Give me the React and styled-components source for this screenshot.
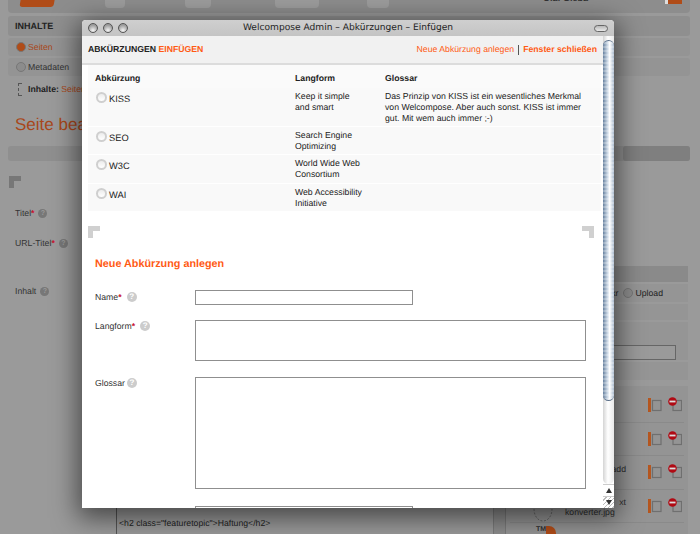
import styled, { createGlobalStyle } from "styled-components";

const GlobalStyle = createGlobalStyle`
  html, body {
    margin: 0;
    padding: 0;
    background: #9a9a9a;
  }
  * {
    box-sizing: border-box;
  }
`;

const abbreviations = [
  {
    name: "KISS",
    long: ["Keep it simple", "and smart"],
    glossary: [
      "Das Prinzip von KISS ist ein wesentliches Merkmal",
      "von Welcompose. Aber auch sonst. KISS ist immer",
      "gut. Mit wem auch immer ;-)",
    ],
    height: 38,
  },
  { name: "SEO", long: ["Search Engine", "Optimizing"], glossary: [], height: 27 },
  { name: "W3C", long: ["World Wide Web", "Consortium"], glossary: [], height: 28 },
  { name: "WAI", long: ["Web Accessibility", "Initiative"], glossary: [], height: 27 },
];

const fileRows = [
  { top: "", bottom: "" },
  { top: "", bottom: "" },
  { top: "add", bottom: "" },
  { top: "xt", bottom: "konverter.jpg" },
];

function FileIcons() {
  return (
    <svg width="34" height="16" viewBox="0 0 34 16">
      <rect x="0" y="1" width="3" height="14" fill="#b5561f" />
      <rect x="4.5" y="3.5" width="8.5" height="10" fill="none" stroke="#6f6f6f" strokeWidth="1.2" />
      <rect x="25" y="3.5" width="8.5" height="10" fill="none" stroke="#6f6f6f" strokeWidth="1.2" />
      <circle cx="24.5" cy="4.5" r="4.3" fill="#b00a14" />
      <rect x="21.5" y="3.6" width="6" height="1.8" fill="#ddd" />
    </svg>
  );
}

function Gear() {
  return (
    <svg width="20" height="13" viewBox="0 0 20 13">
      <path d="M1 0 C1 7 5 12 10 12 C15 12 19 7 19 0" fill="none" stroke="#666" strokeDasharray="2 1.5" />
    </svg>
  );
}

function PageBehind() {
  return (
    <Page>
      <TopBar>
        <Logo />
        <GhostIcon $left={105} $width={20} />
        <GhostIcon $left={185} $width={26} />
        <GhostIcon $left={275} $width={44} />
        <GhostIcon $left={367} $width={22} />
        <UserName>Olaf Gleba</UserName>
        <UserBox />
      </TopBar>
      <SectionBar>INHALTE</SectionBar>
      <TabRow>
        <BackRadio $on />
        <TabLabel $on>Seiten</TabLabel>
      </TabRow>
      <TabRow>
        <BackRadio />
        <TabLabel>Metadaten</TabLabel>
      </TabRow>
      <Breadcrumb>
        <CropMark />
        <b>Inhalte:</b>&nbsp;<em>Seiten</em>
      </Breadcrumb>
      <PageTitle>Seite bearbeiten</PageTitle>
      <ToolBar>
        <ToolBarEnd />
      </ToolBar>
      <Columns>
        <FormSide>
          <BackCorner />
          <BackLabel $top={19}>
            <span>
              Titel<Req>*</Req>
            </span>
            <BackHelp>?</BackHelp>
          </BackLabel>
          <BackLabel $top={18}>
            <span>
              URL-Titel<Req>*</Req>
            </span>
            <BackHelp>?</BackHelp>
          </BackLabel>
          <BackLabel $top={36}>
            <span>Inhalt</span>
            <BackHelp>?</BackHelp>
          </BackLabel>
          <Editor>&lt;h2 class="featuretopic"&gt;Haftung&lt;/h2&gt;</Editor>
        </FormSide>
        <Gutter />
        <Sidebar>
          <SideHead />
          <SideRow $height={18}>
            <span>kr</span>
            <BackRadio />
            <span>Upload</span>
          </SideRow>
          <SideRow $height={16} />
          <SideRow $height={38} $end>
            <SideInput />
          </SideRow>
          <SideRow $height={18} />
          <FileList>
            {fileRows.map((row, i) => (
              <FileRow key={i}>
                <FileThumb>{i === 3 && <Gear />}</FileThumb>
                <FileName>
                  <FileTop>{row.top}</FileTop>
                  {row.bottom}
                </FileName>
                <FileIcons />
              </FileRow>
            ))}
            <LastRow>
              TM
              <OrangeMark />
            </LastRow>
          </FileList>
        </Sidebar>
      </Columns>
    </Page>
  );
}

export default function App() {
  return (
    <>
      <GlobalStyle />
      <Viewport>
        <PageBehind />
        <Window>
          <TitleBar>
            <Lights>
              <Light />
              <Light />
              <Light />
            </Lights>
            <WindowTitle>Welcompose Admin – Abkürzungen – Einfügen</WindowTitle>
            <Pill />
          </TitleBar>
          <WindowBody>
            <Content>
              <Header>
                <HeaderTitle>
                  ABKÜRZUNGEN <span>EINFÜGEN</span>
                </HeaderTitle>
                <HeaderLinks>
                  <HeaderLink>Neue Abkürzung anlegen</HeaderLink>
                  <Divider />
                  <HeaderLink $bold>Fenster schließen</HeaderLink>
                </HeaderLinks>
              </Header>
              <Table>
                <TableHead>
                  <span>Abkürzung</span>
                  <span>Langform</span>
                  <span>Glossar</span>
                </TableHead>
                {abbreviations.map((item) => (
                  <TableRow key={item.name} $height={item.height}>
                    <NameCell>
                      <Radio />
                      {item.name}
                    </NameCell>
                    <TextCell>
                      {item.long.map((line) => (
                        <div key={line}>{line}</div>
                      ))}
                    </TextCell>
                    <TextCell>
                      {item.glossary.map((line) => (
                        <div key={line}>{line}</div>
                      ))}
                    </TextCell>
                  </TableRow>
                ))}
              </Table>
              <Corners>
                <Corner />
                <Corner $right />
              </Corners>
              <FormHeading>Neue Abkürzung anlegen</FormHeading>
              <Form>
                <FieldLabel>
                  <span>
                    Name<Req>*</Req>
                  </span>
                  <Help $gap={5}>?</Help>
                </FieldLabel>
                <ShortInput />
                <FieldLabel $tight>
                  <span>
                    Langform<Req>*</Req>
                  </span>
                  <Help $gap={5}>?</Help>
                </FieldLabel>
                <LongField $height={41} $after={1} />
                <FieldLabel $tight>
                  <span>Glossar</span>
                  <Help $gap={2}>?</Help>
                </FieldLabel>
                <LongField $height={112} $after={2} />
                <span />
                <ShortInput />
              </Form>
            </Content>
            <Scrollbar>
              <Track>
                <Thumb />
              </Track>
              <ArrowButton>
                <Arrow />
              </ArrowButton>
              <ArrowButton $grip>
                <Arrow $down />
              </ArrowButton>
            </Scrollbar>
          </WindowBody>
        </Window>
      </Viewport>
    </>
  );
}

const Viewport = styled.div`
  position: relative;
  width: 700px;
  height: 534px;
  overflow: hidden;
  background: #9a9a9a;
  font-family: "Liberation Sans", Arial, sans-serif;
  text-rendering: geometricPrecision;
`;

/* page dimmed behind the popup */
const Page = styled.div`
  display: flex;
  flex-direction: column;
  height: 534px;
  padding: 0 10px 0 8px;
  font-size: 8.7px;
  color: #2c2c2c;
`;

const TopBar = styled.div`
  position: relative;
  flex: none;
  height: 13px;
  background: #8d8d8d;
  border-radius: 0 0 4px 4px;
  overflow: hidden;
`;

const Logo = styled.div`
  position: absolute;
  left: 12px;
  top: 0;
  width: 34px;
  height: 7px;
  background: #b04c18;
  border-radius: 0 0 3px 3px;
  transform: skewX(-10deg);
`;

const GhostIcon = styled.div`
  position: absolute;
  left: ${(p) => p.$left - 8}px;
  top: 0;
  width: ${(p) => p.$width}px;
  height: 8px;
  background: #9c9c9c;
  border-radius: 0 0 4px 4px;
`;

const UserName = styled.div`
  position: absolute;
  left: 535px;
  top: -8px;
  font-size: 9px;
  line-height: 12px;
  font-weight: bold;
  color: #333;
`;

const UserBox = styled.div`
  position: absolute;
  left: 657px;
  top: 0;
  width: 17px;
  height: 4px;
  background: #b04c18;
  border-left: 3px solid #ddd;
`;

const SectionBar = styled.div`
  flex: none;
  height: 20px;
  margin-top: 3px;
  padding-left: 7px;
  background: #8f8f8f;
  border-radius: 3px;
  font-size: 9px;
  font-weight: bold;
  line-height: 20px;
  color: #222;
`;

const TabRow = styled.div`
  flex: none;
  display: flex;
  align-items: center;
  gap: 2px;
  height: 18px;
  margin-top: 2px;
  padding-left: 8px;
  background: #949494;
  border-radius: 3px;
`;

const BackRadio = styled.span`
  flex: none;
  width: 10px;
  height: 10px;
  border-radius: 50%;
  border: 1px solid #777;
  background: ${(p) => (p.$on ? "#b04c18" : "#8c8c8c")};
`;

const TabLabel = styled.span`
  color: ${(p) => (p.$on ? "#a8471a" : "#333")};
`;

const Breadcrumb = styled.div`
  flex: none;
  display: flex;
  align-items: center;
  height: 16px;
  margin-top: 5px;
  padding-left: 10px;
  color: #222;

  em {
    font-style: normal;
    color: #a8471a;
  }
`;

const CropMark = styled.span`
  width: 4px;
  height: 13px;
  margin-right: 6px;
  border: 1px dashed #555;
  border-right: 0;
`;

const PageTitle = styled.div`
  flex: none;
  margin: 16px 0 0 7px;
  font-size: 17px;
  line-height: 24px;
  color: #a8471a;
`;

const ToolBar = styled.div`
  flex: none;
  display: flex;
  justify-content: flex-end;
  height: 15px;
  margin-top: 9px;
  background: #8f8f8f;
  border-radius: 3px;
`;

const ToolBarEnd = styled.div`
  width: 67px;
  background: #7f7f7f;
  border-radius: 3px;
`;

const Columns = styled.div`
  flex: 1;
  display: flex;
  min-height: 0;
`;

const FormSide = styled.div`
  position: relative;
  display: flex;
  flex-direction: column;
  width: 485px;
  padding-top: 15px;
`;

const BackCorner = styled.div`
  width: 12px;
  height: 12px;
  border-left: 5px solid #777;
  border-top: 5px solid #777;
  margin-left: 1px;
`;

const BackLabel = styled.div`
  display: flex;
  align-items: center;
  gap: 4px;
  height: 12px;
  margin: ${(p) => p.$top}px 0 0 7px;
  color: #333;
`;

const BackHelp = styled.span`
  width: 9px;
  height: 9px;
  border-radius: 50%;
  background: #777;
  color: #9a9a9a;
  font-size: 7px;
  font-weight: bold;
  line-height: 9px;
  text-align: center;
`;

const Editor = styled.div`
  margin: auto 0 0 108px;
  height: 26px;
  padding: 9px 0 0 2px;
  border-left: 1px solid #555;
  line-height: 12px;
  color: #222;
  white-space: nowrap;
`;

const Gutter = styled.div`
  width: 13px;
  margin-top: auto;
  height: 40px;
  border-left: 1px solid #7a7a7a;
  border-right: 1px solid #7a7a7a;
  background: #8c8c8c;
`;

const Sidebar = styled.div`
  flex: 1;
  display: flex;
  flex-direction: column;
  gap: 2px;
  padding-top: 105px;
  margin-right: 2px;
`;

const SideHead = styled.div`
  flex: none;
  height: 16px;
  background: #8a8a8a;
`;

const SideRow = styled.div`
  flex: none;
  display: flex;
  justify-content: flex-end;
  gap: 2px;
  height: ${(p) => p.$height}px;
  padding-right: ${(p) => (p.$end ? 12 : 25)}px;
  align-items: ${(p) => (p.$end ? "flex-end" : "center")};
  background: #959595;
  color: #222;

  span:first-child {
    margin-right: 3px;
  }
`;

const SideInput = styled.div`
  width: 160px;
  height: 15px;
  border: 1px solid #666;
  background: #9a9a9a;
`;

const FileList = styled.div`
  flex: 1;
  margin-top: 4px;
  padding: 3px 4px 0;
  background: #949494;
`;

const FileRow = styled.div`
  display: flex;
  align-items: center;
  height: 33.5px;
  padding-right: 2px;
  border-bottom: 1px solid #8a8a8a;
`;

const FileThumb = styled.div`
  flex: none;
  display: flex;
  align-items: flex-end;
  width: 55px;
  height: 100%;
  padding-left: 23px;
`;

const FileName = styled.div`
  width: 61px;
  min-height: 20px;
  margin: 3px 22px 0 0;
  font-size: 8.7px;
  line-height: 10px;
  color: #2c2c2c;
`;

const FileTop = styled.div`
  min-height: 10px;
  text-align: right;
`;

const LastRow = styled.div`
  display: flex;
  align-items: flex-start;
  padding: 3px 0 0 26px;
  font-size: 7px;
  font-weight: bold;
`;

const OrangeMark = styled.span`
  width: 10px;
  height: 10px;
  background: #b04c18;
  border-radius: 0 7px 0 0;
`;

/* popup window */
const Window = styled.div`
  position: absolute;
  left: 82px;
  top: 20px;
  display: flex;
  flex-direction: column;
  width: 532px;
  height: 488px;
  border-radius: 4px 4px 0 0;
  overflow: hidden;
  background: #fff;
  box-shadow: 0 6px 26px 4px rgba(0, 0, 0, 0.55);
`;

const TitleBar = styled.div`
  position: relative;
  flex: none;
  display: flex;
  align-items: center;
  justify-content: center;
  height: 16px;
  background: linear-gradient(#cfcfcf, #c4c4c4);
`;

const Lights = styled.div`
  position: absolute;
  left: 6px;
  top: 3px;
  display: flex;
  gap: 5px;
`;

const Light = styled.span`
  width: 10px;
  height: 10px;
  border-radius: 50%;
  border: 1px solid #555;
  background: radial-gradient(circle at 50% 80%, #f4f4f4, #9c9c9c 70%);
`;

const WindowTitle = styled.div`
  font-family: "DejaVu Sans", sans-serif;
  font-size: 9.1px;
  line-height: 17px;
  color: #222;
`;

const Pill = styled.span`
  position: absolute;
  right: 6px;
  top: 5px;
  width: 14px;
  height: 7px;
  border-radius: 4px;
  border: 1px solid #666;
  background: linear-gradient(#b8b8b8, #e8e8e8);
`;

const WindowBody = styled.div`
  flex: 1;
  display: flex;
  min-height: 0;
`;

const Content = styled.div`
  flex: 1;
  min-width: 0;
  overflow: hidden;
  font-size: 8.7px;
  line-height: 11px;
  color: #222;
`;

const Header = styled.div`
  display: flex;
  align-items: center;
  justify-content: space-between;
  height: 29px;
  padding: 0 6px;
  background: #f1f1f1;
  border-bottom: 2px solid #dcdcdc;
`;

const HeaderTitle = styled.div`
  font-weight: bold;
  color: #222;

  span {
    color: #ff5a14;
  }
`;

const HeaderLinks = styled.div`
  display: flex;
  align-items: center;
  gap: 4px;
`;

const HeaderLink = styled.span`
  font-weight: ${(p) => (p.$bold ? "bold" : "normal")};
  color: #ff5a14;
`;

const Divider = styled.span`
  width: 1px;
  height: 10px;
  background: #555;
`;

const Table = styled.div`
  margin: 0 2px 0 6px;
`;

const TableHead = styled.div`
  display: grid;
  grid-template-columns: 200px 90px 1fr;
  height: 23px;
  padding: 8px 0 0 7px;
  background: #fafafa;
  font-weight: bold;
`;

const TableRow = styled.div`
  display: grid;
  grid-template-columns: 200px 90px 1fr;
  height: ${(p) => p.$height}px;
  margin-bottom: 1px;
  padding-left: 7px;
  background: #f9f9f9;
`;

const NameCell = styled.div`
  display: flex;
  align-items: flex-start;
  gap: 2px;
  padding-top: 5px;
  margin-left: 1px;
  font-size: 9.3px;
  line-height: 13px;
`;

const Radio = styled.span`
  flex: none;
  width: 11px;
  height: 11px;
  margin-top: -1px;
  border-radius: 50%;
  border: 2px solid #cfcfcf;
  background: linear-gradient(#ececec, #fff);
`;

const TextCell = styled.div`
  padding-top: 3px;
`;

const Corners = styled.div`
  display: flex;
  justify-content: space-between;
  margin: 15px 9px 0 6px;
`;

const Corner = styled.span`
  width: 12px;
  height: 12px;
  border-top: 5px solid #d0d0d0;
  ${(p) => (p.$right ? "border-right" : "border-left")}: 5px solid #d0d0d0;
`;

const FormHeading = styled.div`
  margin: 19px 0 0 13px;
  font-size: 10.8px;
  line-height: 14px;
  font-weight: bold;
  color: #ff5a14;
`;

const Form = styled.div`
  display: grid;
  grid-template-columns: 100px 391px;
  row-gap: 15px;
  margin: 19px 0 0 13px;
`;

const FieldLabel = styled.div`
  display: flex;
  align-items: flex-start;
  padding-top: ${(p) => (p.$tight ? 1 : 2)}px;
  color: #333;
`;

const Req = styled.span`
  color: #c8102e;
  font-weight: bold;
`;

const Help = styled.span`
  width: 10px;
  height: 10px;
  margin-left: ${(p) => p.$gap}px;
  border-radius: 50%;
  background: #ccc;
  color: #fff;
  font-size: 8px;
  font-weight: bold;
  line-height: 10px;
  text-align: center;
`;

const ShortInput = styled.div`
  width: 218px;
  height: 15px;
  border: 1px solid #8f8f8f;
`;

const LongField = styled.div`
  width: 391px;
  height: ${(p) => p.$height}px;
  margin-bottom: ${(p) => p.$after}px;
  border: 1px solid #8f8f8f;
`;

const Scrollbar = styled.div`
  flex: none;
  display: flex;
  flex-direction: column;
  width: 11px;
  background: #fff;
`;

const Track = styled.div`
  flex: 1;
  padding-top: 4px;
  background: linear-gradient(90deg, #d4d4d4, #fff 45%, #e8e8e8);
  border-radius: 0 0 6px 6px;
`;

const Thumb = styled.div`
  height: 361px;
  border-radius: 6px;
  border: 1px solid #5b6f88;
  border-width: 1px 0 1px 0;
  background: repeating-linear-gradient(0deg, rgba(255, 255, 255, 0.25) 0 2px, transparent 2px 4px),
    linear-gradient(90deg, #66809e, #d5e0ec 45%, #fff 60%, #a9bace);
`;

const ArrowButton = styled.div`
  flex: none;
  display: flex;
  align-items: center;
  justify-content: center;
  height: 12px;
  background: ${(p) =>
    p.$grip
      ? "repeating-linear-gradient(135deg, #fff 0 2px, #bbb 2px 3px)"
      : "#fff"};
  border-top: 1px solid #ccc;
`;

const Arrow = styled.span`
  width: 0;
  height: 0;
  border-left: 3px solid transparent;
  border-right: 3px solid transparent;
  ${(p) => (p.$down ? "border-top" : "border-bottom")}: 5px solid #333;
`;
